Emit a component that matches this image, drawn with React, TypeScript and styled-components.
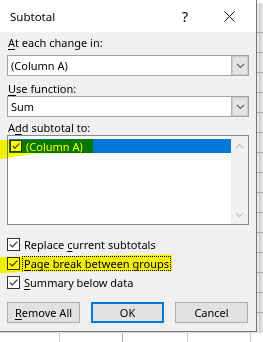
import * as React from 'react';
import styled, { createGlobalStyle } from 'styled-components';

const GlobalStyle = createGlobalStyle`
  html, body {
    margin: 0;
    padding: 0;
    background: #ffffff;
  }
  * {
    box-sizing: border-box;
  }
`;

const uiFont = `"Noto Sans", "Open Sans", "Liberation Sans", sans-serif`;

const Page = styled.div`
  position: relative;
  display: grid;
  grid-template-columns: 257px 6px;
  grid-template-rows: 332px 10px;
  width: 263px;
  height: 342px;
  overflow: hidden;
  font-family: ${uiFont};
  font-size: 11px;
  color: #000;
`;

const SheetSide = styled.div`
  background:
    linear-gradient(#ffffff, #ffffff) top / 100% 3px no-repeat,
    repeating-linear-gradient(to bottom, transparent 0, transparent 19px, #a8a8a8 19px, #a8a8a8 20px) 0 13px,
    linear-gradient(to right, #e8e8e8 0, #e8e8e8 2px, #d2d2d2 2px, #d2d2d2 4px, #e4e4e4 4px);
`;

const SheetBottom = styled.div`
  grid-column: 1 / 3;
  background:
    linear-gradient(#d8d8d8, #d8d8d8) top / 100% 1px no-repeat,
    linear-gradient(to right, transparent 59px, #c8c8c8 59px, #c8c8c8 60px, transparent 60px,
      transparent 122px, #b0b0b0 122px, #b0b0b0 123px, transparent 123px,
      transparent 187px, #c8c8c8 187px, #c8c8c8 188px, transparent 188px,
      transparent 250px, #c8c8c8 250px, #c8c8c8 251px, transparent 251px),
    #ffffff;
`;

const Dialog = styled.div`
  position: relative;
  display: flex;
  flex-direction: column;
  background: #f0f0f0;
  border-right: 1px solid #777;
  border-bottom: 1px solid #777;
`;

const TitleBar = styled.div`
  display: flex;
  align-items: center;
  height: 32px;
  padding-left: 10px;
  background: #ffffff;
`;

const Title = styled.span`
  flex: 1;
  font-size: 11.5px;
  margin-top: 1px;
`;

const HelpMark = styled.span`
  width: 12px;
  margin-right: 33px;
  font-size: 14px;
  text-align: center;
`;

const CloseIcon = styled.svg`
  width: 11px;
  height: 11px;
  margin-right: 21px;
  margin-top: 1px;
`;

const Body = styled.div`
  display: flex;
  flex-direction: column;
  padding: 3px 7px 0 7px;
`;

const Label = styled.div<{ $gap: number }>`
  height: 15px;
  line-height: 15px;
  padding-left: 1px;
  margin-top: ${p => p.$gap}px;
  white-space: nowrap;
`;

const Key = styled.span`
  text-decoration: underline;
  text-underline-offset: 2px;
`;

const Combo = styled.div<{ $gap: number }>`
  display: flex;
  height: 21px;
  margin-top: ${p => p.$gap}px;
  width: 242px;
  background: #ffffff;
  border: 1px solid #a4a4a4;
`;

const ComboText = styled.span`
  flex: 1;
  padding-left: 3px;
  line-height: 19px;
`;

const ComboButton = styled.span`
  display: flex;
  align-items: center;
  justify-content: center;
  width: 17px;
  background: #e3e3e3;
  border-left: 1px solid #b4b4b4;
  box-shadow: inset 0 0 0 1px #cdcdcd;
`;

const ListBox = styled.div`
  display: flex;
  height: 90px;
  width: 242px;
  background: #ffffff;
  border: 1px solid #828790;
`;

const ListItems = styled.div`
  flex: 1;
  padding: 3px 0 0 1px;
`;

const ListRow = styled.div<{ $selected?: boolean }>`
  display: flex;
  align-items: center;
  gap: 4px;
  height: 14px;
  padding-left: 1px;
  background: ${p => (p.$selected ? '#0078d7' : 'transparent')};
  color: ${p => (p.$selected ? '#ffffff' : '#000000')};
`;

const ScrollTrack = styled.div`
  display: flex;
  flex-direction: column;
  justify-content: space-between;
  align-items: center;
  width: 17px;
  padding: 7px 0 6px;
  background: #f0f0f0;
`;

const Box = styled.span<{ $size: number }>`
  display: inline-flex;
  width: ${p => p.$size}px;
  height: ${p => p.$size}px;
  flex: none;
  background: #ffffff;
  border: 1px solid #333333;
`;

const Options = styled.div`
  display: flex;
  flex-direction: column;
  margin-top: 10px;
`;

const OptionRow = styled.div`
  display: flex;
  align-items: center;
  gap: 3px;
  height: 19px;
  white-space: nowrap;
`;

const OptionText = styled.span<{ $focused?: boolean }>`
  padding: 0 1px;
  line-height: 13px;
  outline: ${p => (p.$focused ? '1px dotted #000' : 'none')};
`;

const Buttons = styled.div`
  display: flex;
  gap: 11px;
  margin-top: 10px;
`;

const Button = styled.button<{ $default?: boolean }>`
  width: 73px;
  height: 21px;
  padding: 0;
  font-family: ${uiFont};
  font-size: 11px;
  color: #000;
  background: #e1e1e1;
  border: ${p => (p.$default ? '2px solid #0078d7' : '1px solid #adadad')};
`;

const Marker = styled.svg`
  position: absolute;
  left: 0;
  mix-blend-mode: multiply;
  pointer-events: none;
`;

const Chevron: React.FC<{ up?: boolean; color: string }> = ({ up, color }) => (
  <svg width="9" height="6" viewBox="0 0 9 6">
    <path
      d={up ? 'M1 5 L4.5 1.5 L8 5' : 'M1 1 L4.5 4.5 L8 1'}
      fill="none"
      stroke={color}
      strokeWidth="1.2"
    />
  </svg>
);

const Check: React.FC<{ size?: number }> = ({ size = 13 }) => (
  <Box $size={size}>
    <svg width={size - 2} height={size - 2} viewBox="0 0 11 11">
      <path d="M1.8 5.4 L4.3 7.9 L9.4 2.6" fill="none" stroke="#333" strokeWidth="1.2" />
    </svg>
  </Box>
);

const App: React.FC = () => (
  <Page>
    <GlobalStyle />
    <Dialog>
      <TitleBar>
        <Title>Subtotal</Title>
        <HelpMark>?</HelpMark>
        <CloseIcon viewBox="0 0 11 11">
          <path d="M0.5 0.5 L10.5 10.5 M10.5 0.5 L0.5 10.5" stroke="#111" strokeWidth="1" />
        </CloseIcon>
      </TitleBar>
      <Body>
        <Label $gap={0}>
          <Key>A</Key>t each change in:
        </Label>
        <Combo $gap={5}>
          <ComboText>(Column A)</ComboText>
          <ComboButton>
            <Chevron color="#606060" />
          </ComboButton>
        </Combo>
        <Label $gap={5}>
          <Key>U</Key>se function:
        </Label>
        <Combo $gap={0}>
          <ComboText>Sum</ComboText>
          <ComboButton>
            <Chevron color="#606060" />
          </ComboButton>
        </Combo>
        <Label $gap={3}>
          A<Key>d</Key>d subtotal to:
        </Label>
        <ListBox>
          <ListItems>
            <ListRow $selected>
              <Check size={12} />
              <span>(Column A)</span>
            </ListRow>
          </ListItems>
          <ScrollTrack>
            <Chevron up color="#c2c2c2" />
            <Chevron color="#c2c2c2" />
          </ScrollTrack>
        </ListBox>
        <Options>
          <OptionRow>
            <Check />
            <OptionText>
              Replace <Key>c</Key>urrent subtotals
            </OptionText>
          </OptionRow>
          <OptionRow>
            <Check />
            <OptionText $focused>
              <Key>P</Key>age break between groups
            </OptionText>
          </OptionRow>
          <OptionRow>
            <Check />
            <OptionText>
              <Key>S</Key>ummary below data
            </OptionText>
          </OptionRow>
        </Options>
        <Buttons>
          <Button>
            <Key>R</Key>emove All
          </Button>
          <Button $default>OK</Button>
          <Button>Cancel</Button>
        </Buttons>
      </Body>
      <Marker width="95" height="22" viewBox="0 0 95 22" style={{ top: 138 }}>
        <path d="M0 2 L93 1 L93 15 L34 15.5 L14 19 L0 21 Z" fill="#ffff00" />
      </Marker>
      <Marker width="174" height="20" viewBox="0 0 174 20" style={{ top: 254 }}>
        <path d="M0 3 L172 0.5 L172 17 L30 17.5 L12 18.5 L0 19.5 Z" fill="#ffff00" />
      </Marker>
    </Dialog>
    <SheetSide />
    <SheetBottom />
  </Page>
);

export default App;
